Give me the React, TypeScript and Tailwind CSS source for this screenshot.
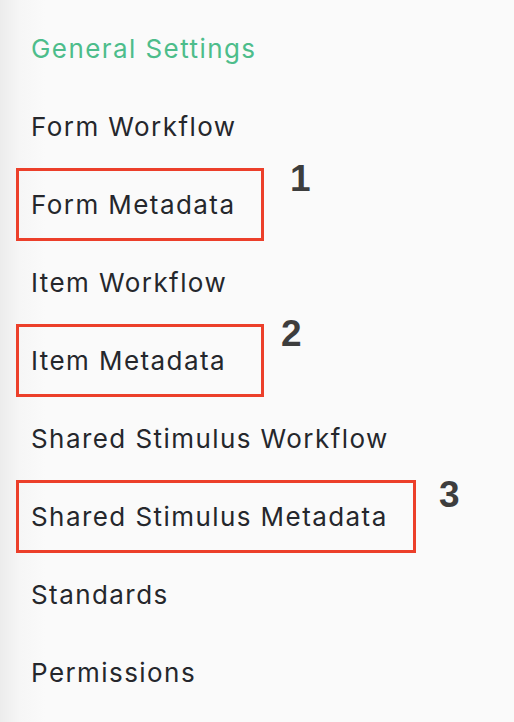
const items: { label: string; box?: { w: string; num: string; pos: string } }[] = [
  { label: "Form Workflow" },
  { label: "Form Metadata", box: { w: "w-[248px]", num: "1", pos: "left-[271px] -top-[11px]" } },
  { label: "Item Workflow" },
  { label: "Item Metadata", box: { w: "w-[248px]", num: "2", pos: "left-[262px] -top-[12px]" } },
  { label: "Shared Stimulus Workflow" },
  { label: "Shared Stimulus Metadata", box: { w: "w-[400px]", num: "3", pos: "left-[420px] -top-[7px]" } },
  { label: "Standards" },
  { label: "Permissions" },
];

export default function App() {
  return (
    <div
      className="min-h-[722px] w-[514px] bg-[linear-gradient(to_right,#ececec_0px,#f6f6f6_20px,#fafafa_45px)] pt-[9px] text-[26px] tracking-[0.055em] text-[#25272c]"
      style={{ fontFamily: "Inter, 'Noto Sans', sans-serif" }}
    >
      <div className="flex h-[78px] items-center pl-[31px] text-[#4dbd8b]">General Settings</div>
      {items.map((it) => (
        <div key={it.label} className="flex h-[78px] items-center pl-[16px]">
          {it.box ? (
            <div className={`relative flex h-[73px] ${it.box.w} items-center border-[3px] border-[#ec3f2a] pl-[12px]`}>
              {it.label}
              <span
                className={`absolute ${it.box.pos} text-[37px] font-bold leading-none tracking-normal text-[#3d3d3d]`}
                style={{ fontFamily: "'Liberation Sans', Arial, sans-serif" }}
              >
                {it.box.num}
              </span>
            </div>
          ) : (
            <div className="pl-[15px]">{it.label}</div>
          )}
        </div>
      ))}
    </div>
  );
}
